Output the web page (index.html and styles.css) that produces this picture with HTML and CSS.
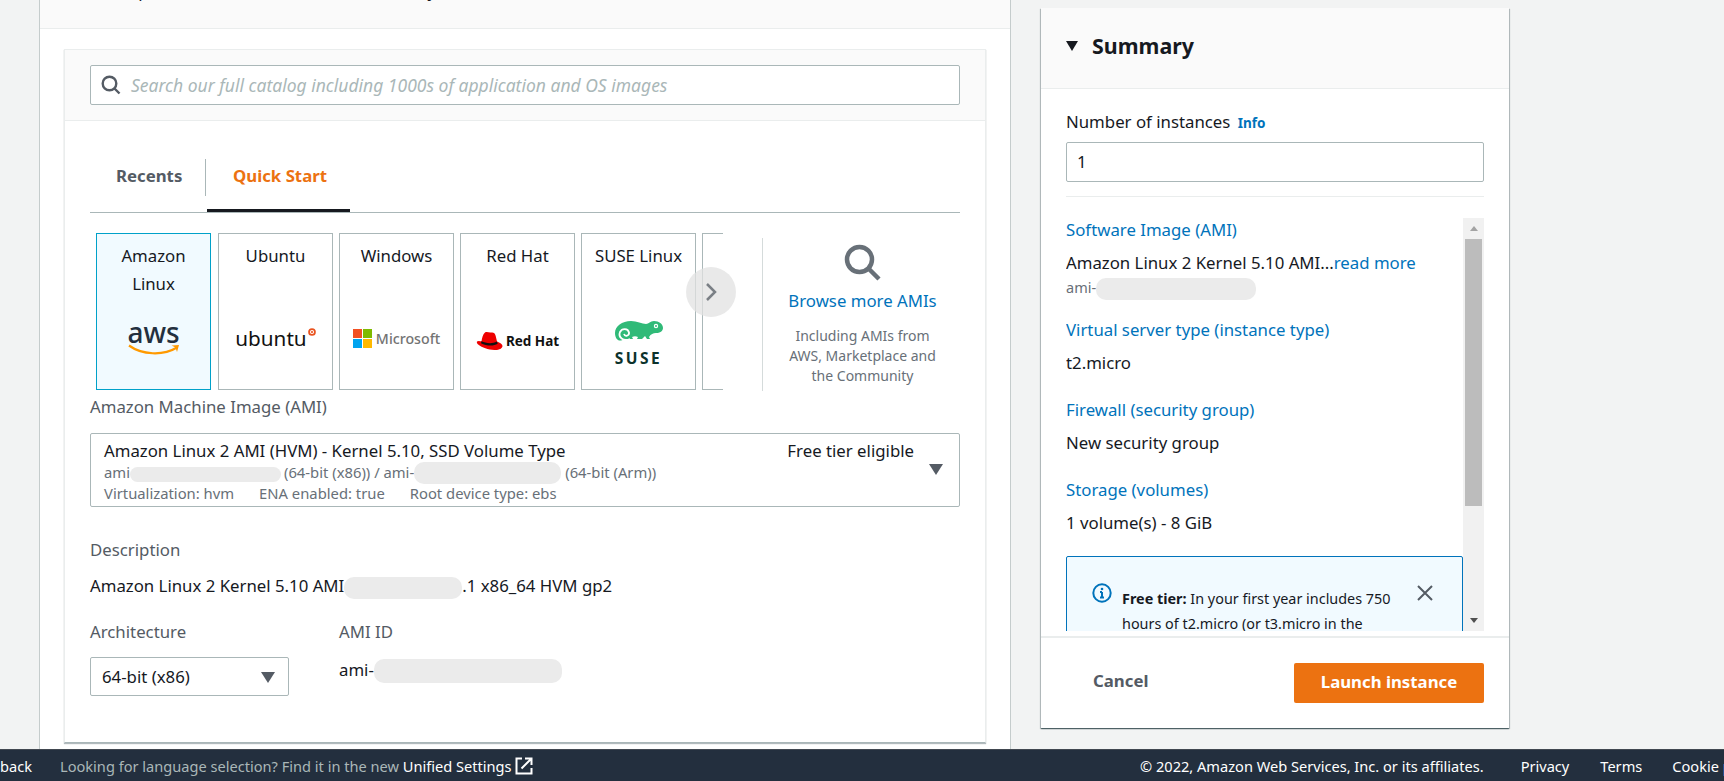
FILE: index.html
```html
<!DOCTYPE html>
<html lang="en">

<head>
    <meta charset="UTF-8">
    <meta name="viewport" content="width=device-width, initial-scale=1.0">
    <title>Launch an instance</title>
    <link rel="stylesheet" href="styles.css">
</head>

<body>

    <div class="page">

        <!-- Application and OS images -->
        <div class="panel">
            <div class="panel-head">
                <p>An AMI is prebuilt and stores the basic OS and your launch tools</p>
            </div>

            <div class="panel-body">
                <div class="catalog">
                    <div class="catalog-search">
                        <div class="search-box">
                            <svg class="search-icon" viewBox="0 0 20 20"><circle cx="8.5" cy="8.5" r="6.8" /><path d="M13.500 13.500l5 5" /></svg>
                            <span>Search our full catalog including 1000s of application and OS images</span>
                        </div>
                    </div>

                    <div class="catalog-body">
                        <div class="tabs">
                            <div class="tab">Recents</div>
                            <div class="tab tab-active">Quick Start</div>
                        </div>

                        <div class="picker">
                            <div class="os-list">
                                <div class="os-card os-selected">
                                    <div class="os-name">Amazon Linux</div>
                                    <div class="os-logo logo-aws">
                                        <span>aws</span>
                                        <svg viewBox="0 0 52 12"><path d="M1 1.5C14 11 35 12 49 3.5" /><path class="tip" d="M43.5 1.5L51 1l-2 7-1.5-4.5z" /></svg>
                                    </div>
                                </div>
                                <div class="os-card">
                                    <div class="os-name">Ubuntu</div>
                                    <div class="os-logo logo-ubuntu">ubuntu<svg viewBox="0 0 10 10"><circle cx="5" cy="5" r="4.8" /><circle class="hole" cx="5" cy="5" r="2.6" /><circle cx="5" cy="5" r="1.4" /></svg></div>
                                </div>
                                <div class="os-card">
                                    <div class="os-name">Windows</div>
                                    <div class="os-logo logo-ms">
                                        <svg viewBox="0 0 19 19">
                                            <rect width="9" height="9" fill="#f25022" />
                                            <rect x="10" width="9" height="9" fill="#7fba00" />
                                            <rect y="10" width="9" height="9" fill="#00a4ef" />
                                            <rect x="10" y="10" width="9" height="9" fill="#ffb900" />
                                        </svg>
                                        <span>Microsoft</span>
                                    </div>
                                </div>
                                <div class="os-card">
                                    <div class="os-name">Red Hat</div>
                                    <div class="os-logo logo-redhat">
                                        <svg viewBox="0 0 27 20">
                                            <path fill="#e00" d="M9 1.5C11 .5 13 1.800 15 1.500 17.500 1 19 2 19.700 5l1.300 5.500c3 1.200 5.500 2.700 5.500 4.500 0 2.500-3.500 4.200-8 4C12 18.800 6 16.500 2.500 13.800 1 12.500.5 11.500 1 10.500 2 9.500 4 10 5.500 10.300 6 7 7 3 9 1.500z" />
                                            <path fill="#111" d="M5.500 10.300c4 1.700 10 3.200 15.500.2l.7 2.300c-5 3-12 1.700-16.700-.6z" />
                                        </svg>
                                        <span>Red Hat</span>
                                    </div>
                                </div>
                                <div class="os-card">
                                    <div class="os-name">SUSE Linux</div>
                                    <div class="os-logo logo-suse">
                                        <svg viewBox="0 0 48 24">
                                            <path fill="#30ba78" d="M0 13C0 6 7 1 16 1c6 0 11 3 15 3 3 0 4-3 8-3 5 0 9 3 9 7 0 3-3 5-7 5-3 0-5 1-7 4l1 2h-3l-2-3-3 3h-5l1-2c-2-1-4-1-6 0l1 2H9C4 23 0 19 0 13z" />
                                            <path class="curl" d="M15 19C8 22 3 17 5 12 7 8 13 8 14 12.500 14.500 16 10 17 9 14" />
                                            <circle cx="41" cy="6" r="2.200" fill="#fff" />
                                            <circle cx="41" cy="6" r="1" fill="#30ba78" />
                                        </svg>
                                        <span>SUSE</span>
                                    </div>
                                </div>
                                <div class="os-card"></div>
                            </div>

                            <div class="os-next">
                                <svg viewBox="0 0 12 20"><path d="M2 2l8 8-8 8" /></svg>
                            </div>

                            <div class="browse">
                                <svg class="browse-icon" viewBox="0 0 38 38"><circle cx="15.500" cy="15.500" r="12.500" /><path d="M24.500 24.500L35 35" /></svg>
                                <a class="browse-link">Browse more AMIs</a>
                                <p>Including AMIs from AWS, Marketplace and the Community</p>
                            </div>
                        </div>

                        <div class="field-label ami-label">Amazon Machine Image (AMI)</div>
                        <div class="ami-select">
                            <div class="ami-info">
                                <div class="ami-title"><span>Amazon Linux 2 AMI (HVM) - Kernel 5.10, SSD Volume Type</span><span>Free tier eligible</span></div>
                                <div class="ami-meta">ami<span class="blur blur-a"></span>(64-bit (x86)) / ami-<span class="blur blur-b"></span>(64-bit (Arm))</div>
                                <div class="ami-meta ami-props"><span>Virtualization: hvm</span><span>ENA enabled: true</span><span>Root device type: ebs</span></div>
                            </div>
                            <div class="caret"></div>
                        </div>

                        <div class="field-label desc-label">Description</div>
                        <div class="desc-value">Amazon Linux 2 Kernel 5.10 AMI<span class="blur blur-c"></span>.1 x86_64 HVM gp2</div>

                        <div class="details">
                            <div class="arch">
                                <div class="field-label">Architecture</div>
                                <div class="arch-select">64-bit (x86)<div class="caret"></div></div>
                            </div>
                            <div class="ami-id">
                                <div class="field-label">AMI ID</div>
                                <div class="ami-id-value">ami-<span class="blur blur-d"></span></div>
                            </div>
                        </div>
                    </div>
                </div>
            </div>
        </div>

        <!-- Summary -->
        <div class="summary">
            <div class="summary-head">
                <div class="summary-arrow"></div>
                <h2>Summary</h2>
            </div>

            <div class="summary-top">
                <div class="count-label">Number of instances <a>Info</a></div>
                <div class="count-input">1</div>
            </div>

            <div class="summary-scroll">
                <div class="summary-list">
                    <a>Software Image (AMI)</a>
                    <p>Amazon Linux 2 Kernel 5.10 AMI...<a class="more">read more</a></p>
                    <div class="summary-ami">ami-<span class="blur blur-e"></span></div>
                    <a>Virtual server type (instance type)</a>
                    <p>t2.micro</p>
                    <a>Firewall (security group)</a>
                    <p>New security group</p>
                    <a>Storage (volumes)</a>
                    <p>1 volume(s) - 8 GiB</p>

                    <div class="free-tier">
                        <svg class="info-icon" viewBox="0 0 20 20"><circle cx="10" cy="10" r="8.700" /><circle class="dot" cx="10" cy="6" r="1.300" /><path d="M10 9v5.500M8 9h2M8 14.500h4" /></svg>
                        <p><b>Free tier:</b> In your first year includes 750 hours of t2.micro (or t3.micro in the</p>
                        <svg class="close-icon" viewBox="0 0 16 16"><path d="M1 1l14 14M15 1L1 15" /></svg>
                    </div>
                </div>
                <div class="scrollbar">
                    <div class="sb-up"></div>
                    <div class="sb-track"><div class="sb-thumb"></div></div>
                    <div class="sb-down"></div>
                </div>
            </div>

            <div class="summary-foot">
                <div class="cancel">Cancel</div>
                <div class="launch">Launch instance</div>
            </div>
        </div>
    </div>

    <!-- Console footer -->
    <div class="footer">
        <div class="footer-left">
            <span class="feedback">back</span>
            <span class="lang">Looking for language selection? Find it in the new <a>Unified Settings</a></span>
            <svg class="ext-icon" viewBox="0 0 18 18"><path d="M7 1.500H1.500v15h15V11" /><path d="M10 1.500h6.500V8M16.500 1.500L6.500 11.500" /></svg>
        </div>
        <div class="footer-right">
            <span class="copy">© 2022, Amazon Web Services, Inc. or its affiliates.</span>
            <span class="privacy">Privacy</span>
            <span class="terms">Terms</span>
            <span class="cookie">Cookie preferences</span>
        </div>
    </div>

</body>

</html>
```

FILE: styles.css
```css
* {
    box-sizing: border-box;
}

html,
body {
    height: 100%;
}

body {
    margin: 0;
    display: flex;
    flex-direction: column;
    overflow: hidden;
    background: #f2f3f3;
    color: #16191f;
    font-family: "Noto Sans", Arial, sans-serif;
    font-size: 16.800px;
}

p {
    margin: 0;
}

a {
    color: #0073bb;
}

.page {
    height: 749px;
    display: flex;
    align-items: flex-start;
    padding-left: 39px;
}

/* Left panel */
.panel {
    width: 972px;
    height: 749px;
    flex-shrink: 0;
    background: #fff;
    border-left: 1px solid #c5cccc;
    border-right: 1px solid #c5cccc;
}

.panel-head {
    height: 29px;
    display: flex;
    align-items: flex-end;
    padding: 0 0 26px 20px;
    background: #fafafa;
    border-bottom: 1px solid #eaeded;
    white-space: nowrap;
}

.panel-body {
    padding: 20px 24px 0 24px;
}

.catalog {
    height: 694px;
    background: #fff;
    border: 1px solid #eaeded;
    border-bottom: 1px solid #aab7b8;
    box-shadow: 0 1px 1px rgba(0, 28, 36, 0.3);
}

.catalog-search {
    height: 71px;
    padding: 15px 25px 0;
    background: #fafafa;
    border-bottom: 1px solid #eaeded;
}

.search-box {
    height: 40px;
    display: flex;
    align-items: center;
    gap: 10px;
    padding-left: 10px;
    background: #fff;
    border: 1px solid #aab7b8;
    border-radius: 2px;
    color: #aab7b8;
    font-size: 17.500px;
    font-style: italic;
}

.search-icon {
    width: 20px;
    height: 20px;
    fill: none;
    stroke: #545b64;
    stroke-width: 2.400;
}

.catalog-body {
    padding: 0 25px;
}

.tabs {
    height: 92px;
    display: flex;
    align-items: flex-end;
    border-bottom: 1px solid #aab7b8;
}

.tab {
    height: 53px;
    display: flex;
    align-items: flex-start;
    padding-top: 5px;
    font-weight: 700;
    color: #545b64;
}

.tab:first-child {
    width: 115px;
    padding-left: 26px;
}

.tab-active {
    width: 143px;
    margin-left: 2px;
    padding-left: 26px;
    color: #ec7211;
    border-bottom: 3px solid #16191f;
    position: relative;
}

.tab-active::before {
    content: "";
    position: absolute;
    left: -2px;
    top: 0;
    height: 37px;
    border-left: 1px solid #aab7b8;
}

/* OS picker */
.picker {
    position: relative;
    height: 177px;
    padding: 20px 0 0 6px;
    display: flex;
}

.os-list {
    width: 627px;
    height: 157px;
    flex-shrink: 0;
    display: flex;
    gap: 6px;
    overflow: hidden;
}

.os-card {
    width: 115px;
    height: 157px;
    flex-shrink: 0;
    display: flex;
    flex-direction: column;
    padding: 8px 4px 16px;
    border: 1px solid #aab7b8;
    text-align: center;
}

.os-selected {
    margin-right: 1px;
    background: #f1faff;
    border-color: #00a1c9;
}

.os-name {
    line-height: 28px;
}

.os-logo {
    height: 70px;
    margin-top: auto;
    display: flex;
    align-items: center;
    justify-content: center;
}

.logo-aws {
    flex-direction: column;
    color: #232f3e;
    font-size: 28px;
    font-weight: 500;
    line-height: 24px;
}

.logo-aws svg {
    width: 52px;
    height: 12px;
    fill: none;
    stroke: #f90;
    stroke-width: 2.200;
}

.logo-aws .tip {
    fill: #f90;
    stroke: none;
}

.logo-ubuntu {
    color: #111;
    font-size: 20.700px;
    align-items: center;
}

.logo-ubuntu svg {
    width: 8px;
    height: 8px;
    margin: -12px 0 0 1px;
    fill: #e95420;
}

.logo-ubuntu .hole {
    fill: #fff;
}

.logo-ms {
    gap: 4px;
    color: #737373;
    font-size: 14.200px;
    font-weight: 500;
}

.logo-ms svg {
    width: 19px;
    height: 19px;
    flex-shrink: 0;
}

.logo-redhat {
    gap: 3px;
    padding-top: 6px;
    color: #111;
    font-size: 13.500px;
    font-weight: 700;
    white-space: nowrap;
}

.logo-redhat svg {
    width: 27px;
    height: 20px;
    flex-shrink: 0;
}

.logo-suse {
    flex-direction: column;
    padding-top: 9px;
    color: #0c322c;
    font-size: 15.500px;
    font-weight: 700;
    letter-spacing: 2.500px;
    line-height: 18px;
}

.logo-suse svg {
    width: 48px;
    height: 26px;
    margin-bottom: 4px;
}

.logo-suse .curl {
    fill: none;
    stroke: #fff;
    stroke-width: 1.800;
}

.os-next {
    position: absolute;
    left: 596px;
    top: 54px;
    width: 50px;
    height: 50px;
    display: flex;
    align-items: center;
    justify-content: center;
    border-radius: 50%;
    background: rgba(225, 225, 225, 0.75);
}

.os-next svg {
    width: 12px;
    height: 20px;
    fill: none;
    stroke: #7a7f85;
    stroke-width: 2.500;
}

.browse {
    width: 199px;
    height: 153px;
    margin: 5px 0 0 39px;
    padding: 6px 0 0 1px;
    display: flex;
    flex-direction: column;
    align-items: center;
    flex-shrink: 0;
    border-left: 1px solid #d5dbdb;
    text-align: center;
}

.browse-icon {
    width: 38px;
    height: 38px;
    fill: none;
    stroke: #687078;
    stroke-width: 4.500;
}

.browse-link {
    margin-top: 7px;
    line-height: 24px;
}

.browse p {
    width: 170px;
    margin-top: 13px;
    color: #687078;
    font-size: 14px;
    line-height: 20px;
}

/* AMI fields */
.field-label {
    color: #545b64;
    line-height: 24px;
}

.ami-label {
    margin-top: 5px;
}

.ami-select {
    height: 74px;
    margin-top: 14px;
    display: flex;
    align-items: flex-start;
    padding: 5px 16px 0 13px;
    border: 1px solid #aab7b8;
    border-radius: 2px;
}

.ami-info {
    flex: 1;
}

.ami-title {
    display: flex;
    justify-content: space-between;
    padding-right: 15px;
    line-height: 24px;
}

.ami-meta {
    color: #687078;
    font-size: 14.800px;
    line-height: 19px;
}

.ami-props {
    display: flex;
    gap: 25px;
}

.blur {
    display: inline-block;
    background: #ebebeb;
    border-radius: 10px;
    vertical-align: middle;
}

.blur-a {
    width: 151px;
    height: 15px;
    margin-right: 3px;
}

.blur-b {
    width: 147px;
    height: 22px;
    margin: -3px 4px 0 0;
}

.blur-c {
    width: 118px;
    height: 22px;
}

.blur-d {
    width: 188px;
    height: 24px;
}

.blur-e {
    width: 160px;
    height: 22px;
}

.caret {
    width: 0;
    height: 0;
    margin-top: 25px;
    border-left: 7px solid transparent;
    border-right: 7px solid transparent;
    border-top: 11px solid #545b64;
}

.desc-label {
    margin-top: 31px;
}

.desc-value {
    margin-top: 12px;
    line-height: 24px;
    white-space: nowrap;
}

.details {
    display: flex;
    margin-top: 21px;
}

.arch {
    width: 249px;
}

.arch-select {
    width: 199px;
    height: 39px;
    margin-top: 13px;
    display: flex;
    align-items: center;
    justify-content: space-between;
    padding: 0 13px 0 11px;
    border: 1px solid #aab7b8;
    border-radius: 2px;
}

.arch-select .caret {
    margin-top: 2px;
}

.ami-id-value {
    margin-top: 14px;
    line-height: 24px;
}

/* Summary panel */
.summary {
    width: 468px;
    height: 720px;
    flex-shrink: 0;
    margin: 8px 0 0 30px;
    background: #fff;
    box-shadow: 0 1px 1px rgba(0, 28, 36, 0.5), 1px 1px 1px rgba(0, 28, 36, 0.2), -1px 1px 1px rgba(0, 28, 36, 0.2);
}

.summary-head {
    height: 81px;
    display: flex;
    align-items: center;
    gap: 14px;
    padding: 0 0 5px 25px;
    background: #fafafa;
    border-bottom: 1px solid #eaeded;
}

.summary-arrow {
    width: 0;
    height: 0;
    border-left: 6px solid transparent;
    border-right: 6px solid transparent;
    border-top: 10px solid #16191f;
}

.summary-head h2 {
    margin: 0;
    font-size: 21.400px;
    font-weight: 700;
    line-height: 28px;
}

.summary-top {
    margin: 0 25px;
    padding-top: 21px;
    height: 108px;
    border-bottom: 1px solid #eaeded;
}

.count-label {
    line-height: 24px;
    color: #16191f;
}

.count-label a {
    margin-left: 3px;
    font-size: 13.500px;
    font-weight: 700;
}

.count-input {
    height: 40px;
    margin-top: 7px;
    padding-left: 10px;
    line-height: 38px;
    border: 1px solid #aab7b8;
    border-radius: 2px;
}

.summary-scroll {
    height: 413px;
    margin: 21px 25px 0;
    display: flex;
    overflow: hidden;
}

.summary-list {
    width: 397px;
    flex-shrink: 0;
}

.summary-list > a {
    display: block;
    line-height: 24px;
}

.summary-list > p {
    margin: 9px 0 23px;
    line-height: 24px;
    white-space: nowrap;
}

.summary-list > p:nth-child(2) {
    margin-bottom: 0;
}

.summary-ami {
    height: 24px;
    margin-bottom: 19px;
    color: #687078;
    font-size: 14.500px;
    line-height: 24px;
}

.free-tier {
    display: flex;
    align-items: flex-start;
    margin-top: -2px;
    padding: 26px 14px 20px 25px;
    background: #f1faff;
    border: 1px solid #0073bb;
    border-radius: 2px;
    font-size: 14.400px;
    line-height: 25px;
}

.info-icon {
    width: 20px;
    height: 20px;
    flex-shrink: 0;
    margin-right: 10px;
    fill: none;
    stroke: #0073bb;
    stroke-width: 2;
}

.info-icon .dot {
    fill: #0073bb;
    stroke: none;
}

.free-tier p {
    width: 280px;
    flex-shrink: 0;
    margin-top: 3px;
    color: #16191f;
}

.close-icon {
    width: 16px;
    height: 16px;
    flex-shrink: 0;
    margin: 2px 0 0 15px;
    fill: none;
    stroke: #545b64;
    stroke-width: 2;
}

.scrollbar {
    width: 21px;
    display: flex;
    flex-direction: column;
    background: #f1f1f1;
}

.sb-up,
.sb-down {
    height: 21px;
    flex-shrink: 0;
    display: flex;
    align-items: center;
    justify-content: center;
}

.sb-up::after {
    content: "";
    border-left: 4px solid transparent;
    border-right: 4px solid transparent;
    border-bottom: 5px solid #a3a3a3;
}

.sb-down::after {
    content: "";
    border-left: 4px solid transparent;
    border-right: 4px solid transparent;
    border-top: 5px solid #505050;
}

.sb-track {
    flex: 1;
    padding: 0 2px;
}

.sb-thumb {
    height: 267px;
    background: #bcbcbc;
}

.summary-foot {
    height: 92px;
    display: flex;
    align-items: flex-start;
    justify-content: space-between;
    margin-top: 5px;
    padding: 25px 25px 0 52px;
    border-top: 2px solid #eaeded;
}

.cancel {
    height: 40px;
    line-height: 36px;
    color: #545b64;
    font-weight: 700;
}

.launch {
    width: 190px;
    height: 40px;
    background: #ec7211;
    border-radius: 2px;
    color: #fff;
    font-weight: 700;
    line-height: 38px;
    text-align: center;
}

/* Footer */
.footer {
    height: 32px;
    flex-shrink: 0;
    display: flex;
    align-items: center;
    justify-content: space-between;
    background: #232f3e;
    border-top: 1px solid #414750;
    color: #fff;
    font-size: 14.600px;
    white-space: nowrap;
    overflow: hidden;
}

.footer-left {
    display: flex;
    align-items: center;
}

.feedback {
    width: 60px;
}

.lang {
    color: #aab7b8;
}

.lang a {
    color: #fff;
}

.ext-icon {
    width: 18px;
    height: 18px;
    margin-left: 3px;
    fill: none;
    stroke: #fff;
    stroke-width: 2;
}

.footer-right {
    width: 584px;
    flex-shrink: 0;
    display: flex;
    overflow: hidden;
}

.privacy {
    margin-left: 37px;
}

.terms {
    margin-left: 31px;
}

.cookie {
    margin-left: 30px;
}
```
